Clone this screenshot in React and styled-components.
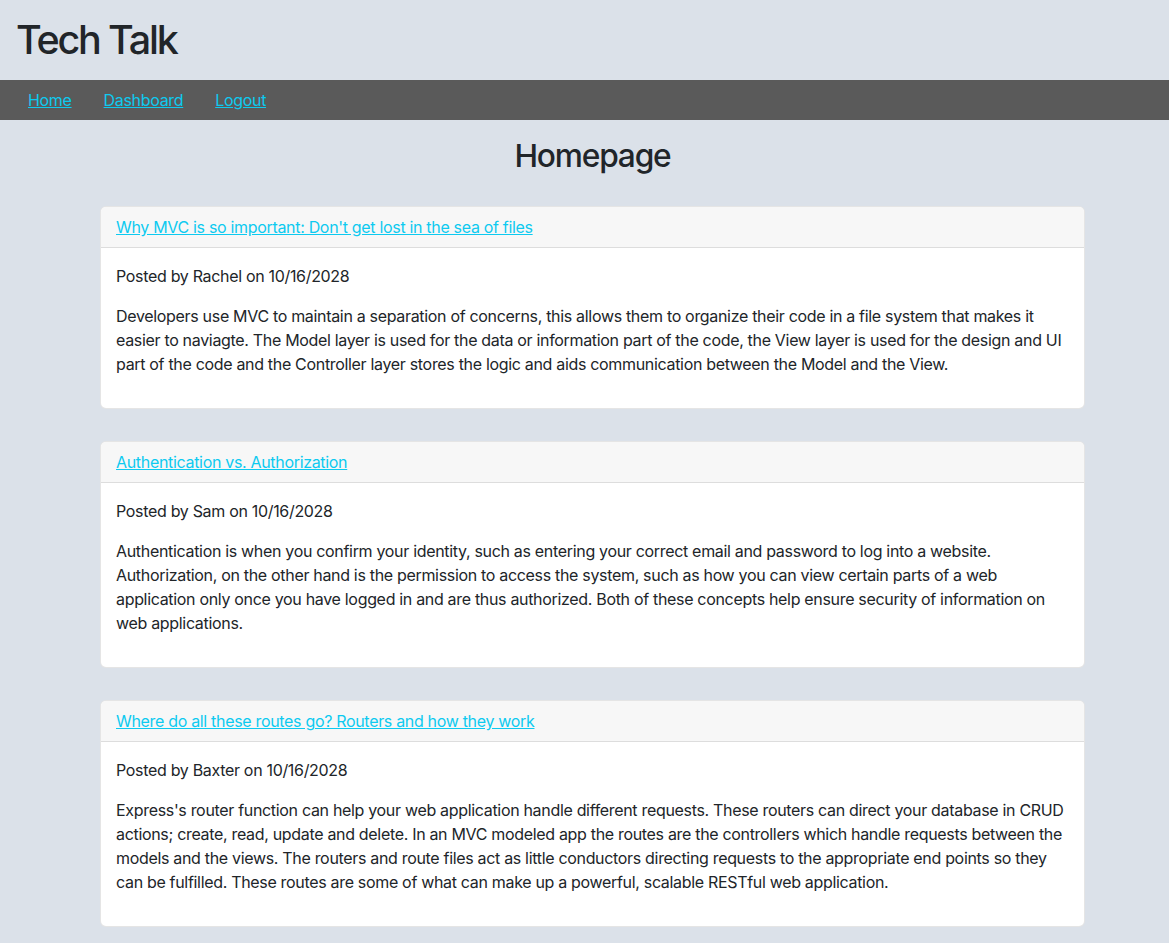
import React from "react";
import styled, { createGlobalStyle } from "styled-components";

const Global = createGlobalStyle`
  html, body { margin: 0; padding: 0; }
  body {
    background: #dbe1e9;
    color: #212529;
    font-family: Inter, "Noto Sans", sans-serif;
    font-size: 16px;
    line-height: 1.5;
    letter-spacing: -0.32px;
  }
  * { box-sizing: border-box; }
`;

const Header = styled.header`
  height: 80px;
  display: flex;
  align-items: center;
  padding: 1px 16px 0;
`;

const Title = styled.h1`
  margin: 0;
  font-size: 39.5px;
  font-weight: 500;
  line-height: 1.2;
  letter-spacing: -2.2px;
`;

const Nav = styled.nav`
  height: 40px;
  background: #5a5a5a;
  display: flex;
  align-items: center;
  gap: 32px;
  padding: 0 28px;
`;

const NavLink = styled.a`
  color: #0dcaf0;
  text-decoration: underline;
  font-size: 16px;
`;

const Main = styled.main`
  padding: 17px 84px 20px 100px;
  display: flex;
  flex-direction: column;
`;

const PageTitle = styled.h2`
  margin: 0 0 31px;
  text-align: center;
  font-size: 31.7px;
  font-weight: 500;
  line-height: 1.2;
  letter-spacing: -1.2px;
`;

const CardList = styled.div`
  display: flex;
  flex-direction: column;
  gap: 32px;
`;

const Card = styled.article`
  background: #fff;
  border: 1px solid rgba(0, 0, 0, 0.1);
  border-radius: 6px;
  overflow: hidden;
  padding-bottom: 16px;
`;

const CardHeader = styled.div`
  background: #f7f7f7;
  padding: 8px 15px;
  border-bottom: 1px solid rgba(0, 0, 0, 0.1);
`;

const PostLink = styled.a`
  color: #0dcaf0;
  text-decoration: underline;
`;

const CardBody = styled.div`
  padding: 16px 15px 0;
`;

const Text = styled.p`
  margin: 0 0 16px;
`;

const posts = [
  {
    title: "Why MVC is so important: Don't get lost in the sea of files",
    author: "Rachel",
    body:
      "Developers use MVC to maintain a separation of concerns, this allows them to organize their code in a file system that makes it easier to naviagte. The Model layer is used for the data or information part of the code, the View layer is used for the design and UI part of the code and the Controller layer stores the logic and aids communication between the Model and the View.",
  },
  {
    title: "Authentication vs. Authorization",
    author: "Sam",
    body:
      "Authentication is when you confirm your identity, such as entering your correct email and password to log into a website. Authorization, on the other hand is the permission to access the system, such as how you can view certain parts of a web application only once you have logged in and are thus authorized. Both of these concepts help ensure security of information on web applications.",
  },
  {
    title: "Where do all these routes go? Routers and how they work",
    author: "Baxter",
    body:
      "Express's router function can help your web application handle different requests. These routers can direct your database in CRUD actions; create, read, update and delete. In an MVC modeled app the routes are the controllers which handle requests between the models and the views. The routers and route files act as little conductors directing requests to the appropriate end points so they can be fulfilled. These routes are some of what can make up a powerful, scalable RESTful web application.",
  },
];

export default function App() {
  return (
    <>
      <Global />
      <Header>
        <Title>Tech Talk</Title>
      </Header>
      <Nav>
        <NavLink href="#">Home</NavLink>
        <NavLink href="#">Dashboard</NavLink>
        <NavLink href="#">Logout</NavLink>
      </Nav>
      <Main>
        <PageTitle>Homepage</PageTitle>
        <CardList>
          {posts.map((p) => (
            <Card key={p.title}>
              <CardHeader>
                <PostLink href="#">{p.title}</PostLink>
              </CardHeader>
              <CardBody>
                <Text>Posted by {p.author} on 10/16/2028</Text>
                <Text>{p.body}</Text>
              </CardBody>
            </Card>
          ))}
        </CardList>
      </Main>
    </>
  );
}
